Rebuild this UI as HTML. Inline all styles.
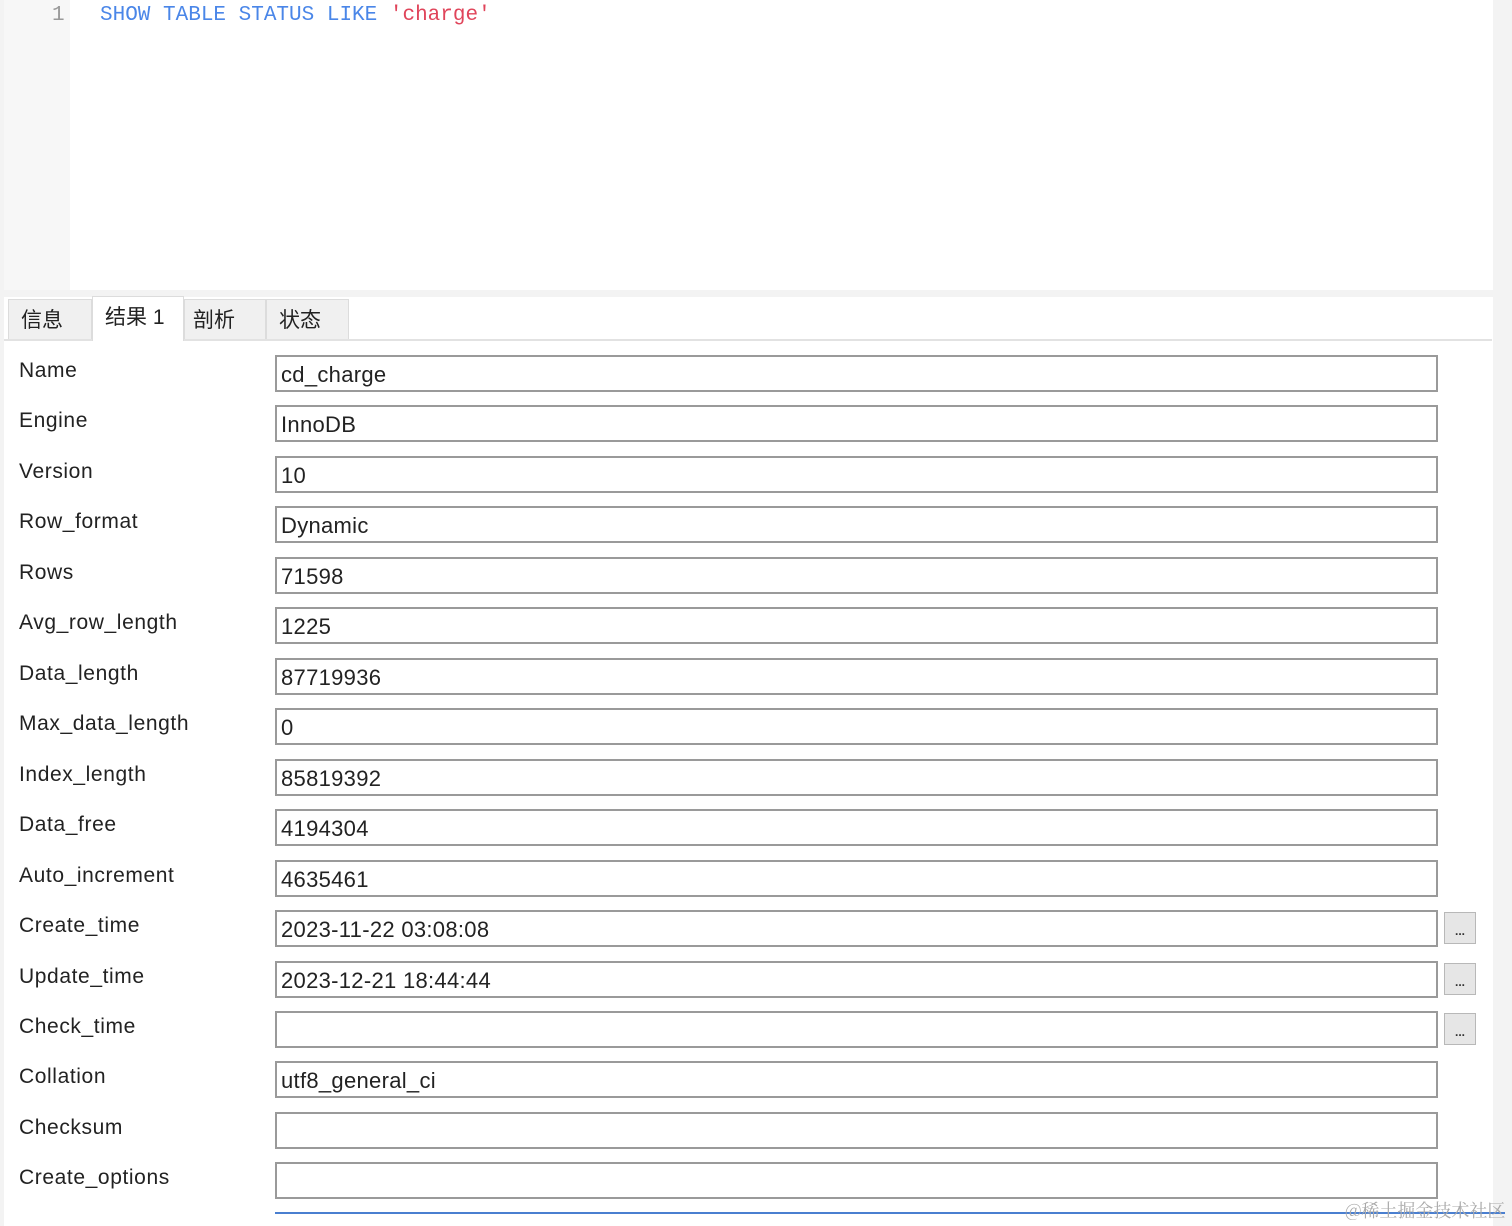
<!DOCTYPE html>
<html><head><meta charset="utf-8"><style>
body{margin:0;width:1512px;height:1226px;background:#fff;position:relative;overflow:hidden;font-family:"Liberation Sans","Noto Sans CJK SC",sans-serif;}
.ed{position:absolute;left:4px;top:0;width:1488px;height:290px;background:#fff;}
.gut{position:absolute;left:4px;top:0;width:66px;height:290px;background:#f7f7f7;}
.rs{position:absolute;left:1493px;top:0;width:19px;height:1226px;background:#f3f3f3;}
.ls{position:absolute;left:0;top:0;width:4px;height:1226px;background:#f3f3f3;}
.hs{position:absolute;left:0;top:290px;width:1512px;height:7px;background:#f3f3f3;}
.code{position:absolute;top:4px;font-family:"Liberation Mono","DejaVu Sans Mono",monospace;font-size:21px;}
.tab{position:absolute;top:299px;height:40px;background:#f0f0f0;border:1px solid #dcdcdc;border-bottom:none;font-size:21px;line-height:42px;padding-left:12px;box-sizing:border-box;color:#222}
.lbl{position:absolute;left:19px;font-size:21px;letter-spacing:0.6px;color:#222}
.box{position:absolute;left:275px;width:1163px;height:37px;border:2px solid #9a9a9a;box-sizing:border-box;font-size:22px;letter-spacing:0.3px;line-height:35px;padding-left:4px;color:#222;background:#fff}
.btn{position:absolute;left:1444px;width:32px;height:32px;background:#e6e6e6;border:1px solid #b8b8b8;box-sizing:border-box;font-size:12px;text-align:center;line-height:36px;font-weight:bold;color:#333}
</style></head><body>
<div class="ls"></div><div class="ed"></div><div class="gut"></div><div class="rs"></div><div class="hs"></div>
<div class="code" style="left:52px;color:#999">1</div>
<div class="code" style="left:100px;color:#4a86e8">SHOW TABLE STATUS LIKE <span style="color:#e0445a">'charge'</span></div>
<div style="position:absolute;left:4px;top:339px;width:1488px;height:2px;background:#e2e2e2"></div>
<div class="tab" style="left:8px;width:84px;">信息</div>
<div class="tab" style="left:92px;top:296px;height:45px;width:92px;background:#fff;line-height:42px">结果 1</div>
<div class="tab" style="left:184px;width:82px;padding-left:8px">剖析</div>
<div class="tab" style="left:266px;width:83px;">状态</div>
<div class="lbl" style="top:359px">Name</div><div class="box" style="top:355px">cd_charge</div>
<div class="lbl" style="top:409px">Engine</div><div class="box" style="top:405px">InnoDB</div>
<div class="lbl" style="top:460px">Version</div><div class="box" style="top:456px">10</div>
<div class="lbl" style="top:510px">Row_format</div><div class="box" style="top:506px">Dynamic</div>
<div class="lbl" style="top:561px">Rows</div><div class="box" style="top:557px">71598</div>
<div class="lbl" style="top:611px">Avg_row_length</div><div class="box" style="top:607px">1225</div>
<div class="lbl" style="top:662px">Data_length</div><div class="box" style="top:658px">87719936</div>
<div class="lbl" style="top:712px">Max_data_length</div><div class="box" style="top:708px">0</div>
<div class="lbl" style="top:763px">Index_length</div><div class="box" style="top:759px">85819392</div>
<div class="lbl" style="top:813px">Data_free</div><div class="box" style="top:809px">4194304</div>
<div class="lbl" style="top:864px">Auto_increment</div><div class="box" style="top:860px">4635461</div>
<div class="lbl" style="top:914px">Create_time</div><div class="box" style="top:910px">2023-11-22 03:08:08</div><div class="btn" style="top:912px">...</div>
<div class="lbl" style="top:965px">Update_time</div><div class="box" style="top:961px">2023-12-21 18:44:44</div><div class="btn" style="top:963px">...</div>
<div class="lbl" style="top:1015px">Check_time</div><div class="box" style="top:1011px"></div><div class="btn" style="top:1013px">...</div>
<div class="lbl" style="top:1065px">Collation</div><div class="box" style="top:1061px">utf8_general_ci</div>
<div class="lbl" style="top:1116px">Checksum</div><div class="box" style="top:1112px"></div>
<div class="lbl" style="top:1166px">Create_options</div><div class="box" style="top:1162px"></div>
<div style="position:absolute;left:275px;top:1212px;width:1230px;height:2px;background:#4a7fd0"></div>
<div style="position:absolute;left:1345px;top:1197px;font-size:18px;color:#aaa;font-family:'Noto Serif CJK SC','Liberation Serif',serif">@稀土掘金技术社区</div>
</body></html>
